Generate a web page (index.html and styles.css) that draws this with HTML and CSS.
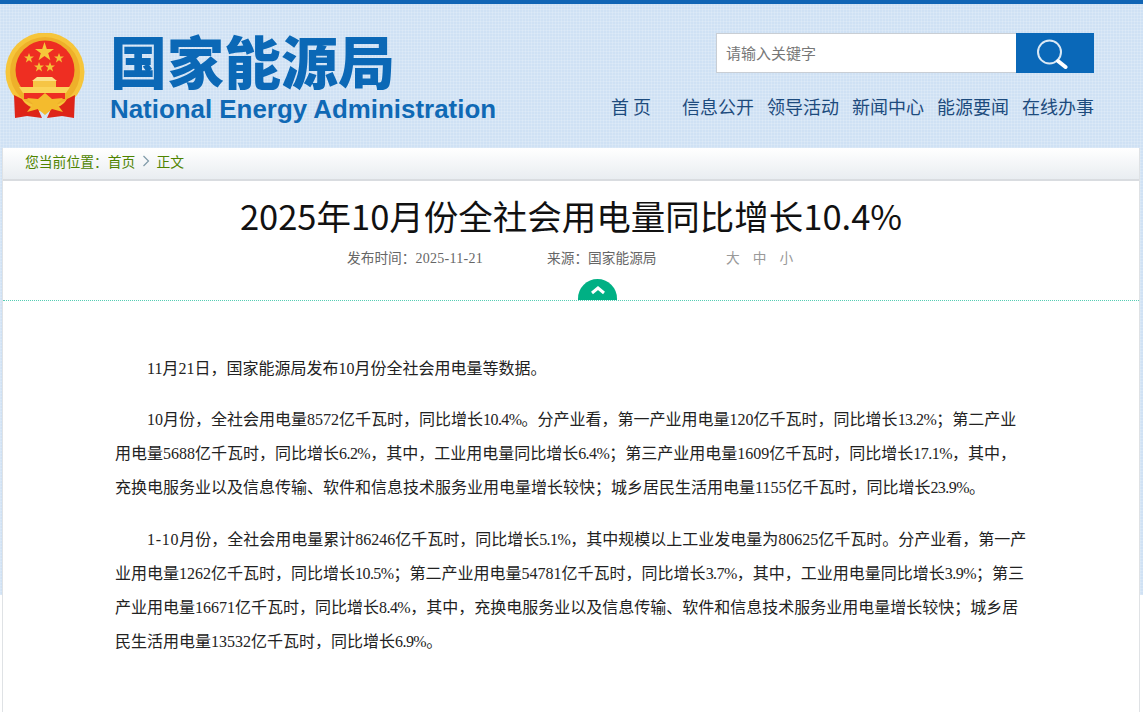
FILE: index.html
```html
<!DOCTYPE html>
<html lang="zh-CN">
<head>
<meta charset="utf-8">
<title>2025年10月份全社会用电量同比增长10.4%</title>
<link rel="stylesheet" href="styles.css">
</head>
<body>
<header class="site-header">
  <a class="brand" href="#">
    <svg class="emblem" viewBox="0 0 80 86" aria-hidden="true">
      <circle cx="40" cy="39" r="39.500" fill="#f6c53a"/>
      <circle cx="40" cy="39" r="35" fill="#eeb02a"/>
      <circle cx="40" cy="37" r="29.500" fill="#ee2e22"/>
      <path d="M9 62 L17 66 C20 72 27 75 33 76 L37 85 L22 83 L10 85 Z" fill="#de2418"/>
      <path d="M70 62 L62 66 C59 72 52 75 46 76 L42 85 L57 83 L69 85 Z" fill="#de2418"/>
      <path d="M14 54 H65 L61 60 H18 Z" fill="#fbd45a"/>
      <rect x="19" y="60" width="41" height="6" fill="#ee2e22"/>
      <path d="M32 44 H47 L52 48 H27 Z" fill="#fde08a"/>
      <rect x="28" y="48" width="23" height="6" fill="#f6c545"/>
      <path d="M40 60 L47 66 L58 65 L52 71 L58 79 L47 76 L40 82 L33 76 L22 79 L28 71 L22 65 L33 66 Z" fill="#f4bb2d"/>
      <path d="M39.500 9 L41.800 16 L49 16 L43.200 20.300 L45.400 27.200 L39.500 23 L33.600 27.200 L35.800 20.300 L30 16 L37.200 16 Z" fill="#f6c83a"/>
      <path d="M24 20 L25.300 23.500 L29 23.500 L26 25.800 L27.100 29.400 L24 27.200 L20.900 29.400 L22 25.800 L19 23.500 L22.700 23.500 Z" fill="#f4c136"/>
      <path d="M54 20 L55.300 23.500 L59 23.500 L56 25.800 L57.100 29.400 L54 27.200 L50.900 29.400 L52 25.800 L49 23.500 L52.700 23.500 Z" fill="#f4c136"/>
      <path d="M34 29 L35.300 32.500 L39 32.500 L36 34.800 L37.100 38.400 L34 36.200 L30.900 38.400 L32 34.800 L29 32.500 L32.700 32.500 Z" fill="#f4c136"/>
      <path d="M45 29 L46.300 32.500 L50 32.500 L47 34.800 L48.100 38.400 L45 36.200 L41.900 38.400 L43 34.800 L40 32.500 L43.700 32.500 Z" fill="#f4c136"/>
    </svg>
    <span class="brand-text">
      <span class="brand-cn">国家能源局</span>
      <span class="brand-en">National Energy Administration</span>
    </span>
  </a>
  <div class="header-tools">
    <form class="search">
      <input class="search-input" type="text" placeholder="请输入关键字">
      <button class="search-btn" type="button" aria-label="搜索">
        <svg viewBox="0 0 32 32" width="32" height="32" aria-hidden="true">
          <circle cx="12.500" cy="15" r="11.500" fill="none" stroke="#dbe9f5" stroke-width="2"/>
          <path d="M21 24 L28.500 30" stroke="#fff" stroke-width="4" stroke-linecap="round"/>
        </svg>
      </button>
    </form>
    <nav class="main-nav">
      <a class="nav-home" href="#">首 页</a>
      <a href="#">信息公开</a>
      <a href="#">领导活动</a>
      <a href="#">新闻中心</a>
      <a href="#">能源要闻</a>
      <a href="#">在线办事</a>
    </nav>
  </div>
</header>
<main class="page">
  <div class="crumbs">您当前位置：<a href="#">首页</a><svg class="crumb-arrow" viewBox="0 0 8 12" width="8" height="12" aria-hidden="true"><path d="M1.500 1 L6.500 6 L1.500 11" fill="none" stroke="#7f9aa8" stroke-width="1.200"/></svg><a href="#">正文</a></div>
  <section class="article-head">
    <h1 class="title">2025年10月份全社会用电量同比增长10.4%</h1>
    <div class="meta">
      <span class="meta-date">发布时间：<span class="date">2025-11-21</span></span>
      <span class="meta-source">来源：国家能源局</span>
      <span class="meta-size"><a href="#">大</a><a href="#">中</a><a href="#">小</a></span>
    </div>
    <div class="toggle">
      <svg viewBox="0 0 16 10" width="16" height="10" aria-hidden="true"><path d="M2 8 L8 3 L14 8" fill="none" stroke="#fff" stroke-width="3"/></svg>
    </div>
  </section>
  <article class="article-body">
    <p>11月21日，国家能源局发布10月份全社会用电量等数据。</p>
    <p>10月份，全社会用电量8572亿千瓦时，同比增长<span class="pct">10.4%</span>。分产业看，第一产业用电量120亿千瓦时，同比增长<span class="pct">13.2%</span>；第二产业用电量5688亿千瓦时，同比增长<span class="pct">6.2%</span>，其中，工业用电量同比增长<span class="pct">6.4%</span>；第三产业用电量1609亿千瓦时，同比增长<span class="pct">17.1%</span>，其中，充换电服务业以及信息传输、软件和信息技术服务业用电量增长较快；城乡居民生活用电量1155亿千瓦时，同比增长<span class="pct">23.9%</span>。</p>
    <p><span class="range">1-10</span>月份，全社会用电量累计86246亿千瓦时，同比增长<span class="pct">5.1%</span>，其中规模以上工业发电量为80625亿千瓦时。分产业看，第一产业用电量1262亿千瓦时，同比增长<span class="pct">10.5%</span>；第二产业用电量54781亿千瓦时，同比增长<span class="pct">3.7%</span>，其中，工业用电量同比增长<span class="pct">3.9%</span>；第三产业用电量16671亿千瓦时，同比增长<span class="pct">8.4%</span>，其中，充换电服务业以及信息传输、软件和信息技术服务业用电量增长较快；城乡居民生活用电量13532亿千瓦时，同比增长<span class="pct">6.9%</span>。</p>
  </article>
</main>
</body>
</html>
```
FILE: styles.css
```css
* { box-sizing: border-box; }
html, body { margin: 0; padding: 0; }
body {
  height: 712px;
  overflow: hidden;
  font-family: "Noto Sans CJK SC", sans-serif;
  background-color: #fff;
  background-image:
    repeating-linear-gradient(0deg, rgba(255,255,255,.16) 0 1px, transparent 1px 3px),
    repeating-linear-gradient(90deg, rgba(255,255,255,.16) 0 1px, transparent 1px 3px),
    linear-gradient(#cfe1f4, #cfe1f4);
  background-size: 100% 595px;
  background-repeat: no-repeat;
}
a { color: inherit; text-decoration: none; }

.site-header {
  height: 148px;
  border-top: 4px solid #1165b5;
  display: flex;
  justify-content: space-between;
  padding: 29px 49px 0 5px;
}
.brand { display: flex; align-items: flex-start; gap: 25px; }
.emblem { width: 80px; height: 86px; display: block; }
.brand-text { display: flex; flex-direction: column; }
.brand-cn {
  font-size: 57px;
  line-height: 60px;
  font-weight: 900;
  color: #0b68b6;
  margin-top: -4px;
  white-space: nowrap;
}
.brand-en {
  font-family: "Liberation Sans", sans-serif;
  font-size: 25.900px;
  line-height: 30px;
  font-weight: 700;
  color: #0f69b5;
  white-space: nowrap;
  margin-top: 5px;
}
.header-tools { display: flex; flex-direction: column; align-items: flex-end; }
.search { display: flex; height: 40px; }
.search-input {
  width: 300px;
  height: 40px;
  border: 1px solid #c9ced4;
  border-right: 0;
  padding: 0 9px 2px;
  font: 15px "Noto Sans CJK SC", sans-serif;
  background: #fff;
  outline: none;
}
.search-input::placeholder { color: #777; opacity: 1; }
.search-btn {
  width: 78px;
  height: 40px;
  border: 0;
  padding: 0 4px 0 0;
  background: #0a68b8;
  display: flex;
  align-items: center;
  justify-content: center;
}
.main-nav {
  margin-top: 19px;
  display: flex;
  gap: 13px;
  font-size: 18px;
  line-height: 28px;
  color: #1d4b7d;
  white-space: nowrap;
}
.nav-home { margin-right: 16px; width: 42px; }

.page {
  margin: 0 3px 0 2px;
  height: 564px;
  background: #fff;
  border-left: 1px solid #dfe2e5;
  border-right: 1px solid #dfe2e5;
}
.crumbs {
  height: 33px;
  padding: 0 0 5px 22px;
  display: flex;
  align-items: center;
  font-size: 13.800px;
  color: #4f8400;
  background: linear-gradient(#fff, #e9edf1);
  border-bottom: 2px solid #d9dce0;
}
.crumb-arrow { margin: 0 6px 0 7px; }
.article-head {
  position: relative;
  height: 120px;
  border-bottom: 1px dotted #55cdb4;
  text-align: center;
}
.title {
  margin: 0;
  padding-top: 10px;
  font-size: 34.500px;
  line-height: 48px;
  font-weight: 400;
  color: #111;
}
.meta {
  margin-top: 8px;
  display: flex;
  font-size: 13.700px;
  line-height: 20px;
  color: #666;
  padding-left: 344px;
  white-space: nowrap;
}
.date {
  font-family: "Liberation Serif", serif;
  font-size: 14px;
  letter-spacing: 0.270px;
}
.meta-date { width: 200px; text-align: left; }
.meta-source { width: 179px; text-align: left; }
.meta-size { display: flex; gap: 13px; color: #999; }
.toggle {
  position: absolute;
  left: 575px;
  bottom: 0;
  width: 39px;
  height: 21px;
  border-radius: 20px 20px 0 0;
  background: #00b084;
  display: flex;
  align-items: flex-start;
  justify-content: center;
  padding-top: 6px;
}
.article-body {
  padding: 51px 0 0 112px;
  width: 1026px;
  font-family: "Liberation Serif", "Noto Sans CJK SC", serif;
  font-size: 16px;
  line-height: 34px;
  color: #222;
}
.article-body p { margin: 0 0 18px; text-indent: 32px; }
.article-body p:first-child { margin-bottom: 17px; }
.pct { letter-spacing: -0.550px; }
.range { letter-spacing: 0.700px; }
```
